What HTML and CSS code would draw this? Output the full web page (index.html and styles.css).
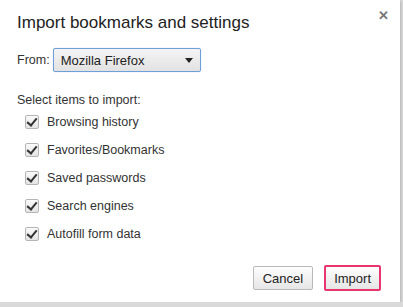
FILE: index.html
```html
<!DOCTYPE html>
<html lang="en">
<head>
  <meta charset="UTF-8">
  <title>Import bookmarks and settings</title>
  <link rel="stylesheet" href="styles.css">
</head>
<body>
  <div class="dialog">
    <div class="dialog-head">
      <h1>Import bookmarks and settings</h1>
      <span class="close">&#x2715;</span>
    </div>

    <div class="from-row">
      <label>From:</label>
      <div class="select-box">
        <span>Mozilla Firefox</span>
        <span class="arrow"></span>
      </div>
    </div>

    <div class="items">
      <div class="items-title">Select items to import:</div>
      <label class="item"><span class="check"></span>Browsing history</label>
      <label class="item"><span class="check"></span>Favorites/Bookmarks</label>
      <label class="item"><span class="check"></span>Saved passwords</label>
      <label class="item"><span class="check"></span>Search engines</label>
      <label class="item"><span class="check"></span>Autofill form data</label>
    </div>

    <div class="buttons">
      <button class="btn">Cancel</button>
      <button class="btn btn-focus">Import</button>
    </div>
  </div>
</body>
</html>
```

FILE: styles.css
```css
body {
  margin: 0;
  background-color: #d9d9d9;
  font-family: "Liberation Sans", Arial, sans-serif;
  color: #333;
  font-size: 12.5px;
}

.dialog {
  width: 400px;
  height: 302px;
  background-color: #fff;
  box-shadow: 0 1px 3px rgba(0, 0, 0, 0.3);
  position: relative;
  box-sizing: border-box;
  padding: 0 17px;
}

.dialog-head {
  display: flex;
  justify-content: space-between;
  padding-top: 13px;
}

h1 {
  margin: 0;
  font-size: 17px;
  font-weight: normal;
  color: #222;
  line-height: 20px;
}

.close {
  position: absolute;
  top: 8px;
  right: 11px;
  font-size: 13px;
  font-weight: bold;
  color: #777;
}

.from-row {
  display: flex;
  align-items: center;
  margin-top: 15px;
}

.from-row label {
  margin-right: 6px;
}

.select-box {
  height: 22px;
  border: 1px solid #6d9fd8;
  border-radius: 2px;
  background: linear-gradient(#f4f4f4, #e2e2e2);
  display: flex;
  align-items: center;
  justify-content: space-between;
  padding: 0 7px;
  box-shadow: 0 0 1px #9cc0e8;
  margin-left: -3px;
  width: 132px;
  color: #222;
  font-size: 13px;
}

.arrow {
  width: 0;
  height: 0;
  border-left: 4px solid transparent;
  border-right: 4px solid transparent;
  border-top: 5px solid #222;
}

.items {
  margin-top: 20px;
}

.items-title {
  line-height: 16px;
}

.item {
  display: flex;
  align-items: center;
  height: 28px;
  padding-left: 8px;
}

.check {
  width: 12px;
  height: 12px;
  border: 1px solid #b5b5b5;
  border-radius: 2px;
  background: linear-gradient(#fafafa, #e4e4e4);
  margin-right: 8px;
  position: relative;
}

.check::after {
  content: "";
  position: absolute;
  left: 3px;
  top: 0px;
  width: 4px;
  height: 8px;
  border-right: 2.5px solid #333;
  border-bottom: 2.5px solid #333;
  transform: rotate(40deg);
}

.buttons {
  position: absolute;
  right: 19px;
  bottom: 11px;
  display: flex;
  align-items: center;
  gap: 11px;
}

.btn {
  font-family: "Liberation Sans", Arial, sans-serif;
  font-size: 13px;
  color: #222;
  height: 24px;
  padding: 0 9px;
  border: 1px solid #b9b9b9;
  border-radius: 2px;
  background: linear-gradient(#fdfdfd, #e6e6e6);
}

.btn-focus {
  border: 2px solid #e8356f;
  height: 26px;
  padding: 0 8px;
}
```
